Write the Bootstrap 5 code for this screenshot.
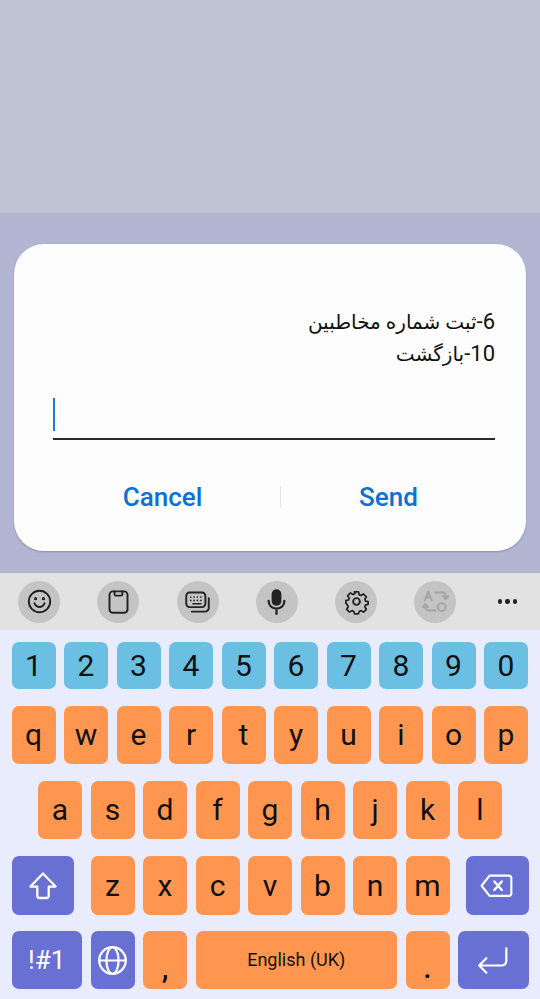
<!DOCTYPE html>
<html lang="en">
<head>
<meta charset="utf-8">
<title>Keyboard dialog</title>
<link href="https://cdn.jsdelivr.net/npm/bootstrap@5.3.0/dist/css/bootstrap.min.css" rel="stylesheet">
<style>
html,body{margin:0;height:100%;}
body{width:540px;height:999px;overflow:hidden;background:#e9ecfd;font-family:Roboto,"Liberation Sans",sans-serif;}
.top-band{height:213px;background:#c0c3d4;}
.scrim{height:360px;background:#b2b6d3;padding:31px 13.5px 0;}
.dialog-box{width:512.5px;height:307px;background:#fdfdfd;border-radius:30px;box-shadow:0 1px 2px rgba(70,70,90,.35);padding-top:62px;}
.msg{padding:0 31px 0 39.5px;font-size:22px;line-height:31px;color:#111;font-family:Roboto,"DejaVu Sans",sans-serif;}
.msg-ar{font-size:20px;}
.field{margin:28px 31px 0 39.5px;height:42px;border-bottom:2px solid #2a2a2c;}
.caret-bar{width:2px;height:33px;background:#1a7fd8;}
.dlg-actions{margin:37px 0 0 31.5px;height:40px;}
.dlg-btn{border:0;background:none;padding:0;color:#0a72d6;font-size:26px;font-weight:500;line-height:40px;border-radius:0;}
.dlg-btn:hover{color:#0a72d6;}
.b-cancel{width:235px;}
.b-send{width:215px;}
.dlg-sep{width:1px;height:22px;background:#e2e2e2;}
.tool-strip{height:57px;background:#e2e2e2;padding-left:18px;gap:37.3px;}
.tool-btn{width:42px;height:42px;border-radius:50%;background:#c4c4c4;flex:none;}
.tool-btn svg{width:27px;height:27px;fill:none;stroke:#222;stroke-width:1.7;stroke-linecap:round;stroke-linejoin:round;}
.tool-btn.dim svg{stroke:#a4a4a4;}
.tool-more{width:20px;margin-left:4px;gap:3px;flex:none;}
.tool-more i{width:4.5px;height:4.5px;border-radius:50%;background:#222;display:block;}
.kb-area{height:369px;background:#e9ecfd;padding:12px 0 0 11.5px;}
.kb-row{gap:8.5px;margin-bottom:17px;height:58px;}
.kb-row.nums{height:47px;}
.kb-row.r4{height:59px;margin-bottom:16px;}
.kb-row.indent{padding-left:26.5px;}
.kb-key{width:44px;height:100%;flex:none;border-radius:7px;color:#111;font-size:30px;line-height:1;}
.k-num{background:#6bbfe3;}
.k-let{background:#ff9650;}
.k-act{background:#6870d3;color:#fff;}
.k-shift{width:62.5px;margin-right:8px;}
.k-back{width:62.5px;margin-left:8px;}
.k-sym{width:70.5px;font-size:26px;}
.k-space{width:201.5px;font-size:18px;}
.k-enter{width:70.5px;}
.k-mark{font-size:30px;padding-top:16px;font-weight:500;}
.k-act svg{fill:none;stroke:#fff;stroke-width:2;stroke-linecap:round;stroke-linejoin:round;}
</style>
</head>
<body>
<div class="top-band"></div>
<div class="scrim">
  <div class="dialog-box">
    <div class="msg text-end" dir="rtl">
      <div>6-<span class="msg-ar">ثبت شماره مخاطبین</span></div>
      <div>10-<span class="msg-ar">بازگشت</span></div>
    </div>
    <div class="field"><div class="caret-bar"></div></div>
    <div class="dlg-actions d-flex align-items-center">
      <button class="btn dlg-btn b-cancel" type="button">Cancel</button>
      <div class="dlg-sep"></div>
      <button class="btn dlg-btn b-send" type="button">Send</button>
    </div>
  </div>
</div>
<div class="tool-strip d-flex align-items-center">
  <div class="tool-btn d-flex align-items-center justify-content-center"><svg viewBox="0 0 24 24"><circle cx="12" cy="12" r="9.5"/><path d="M7.5 13.5c1 2.4 2.6 3.4 4.5 3.4s3.500-1 4.500-3.400"/><circle cx="8.500" cy="9.500" r=".6"/><circle cx="15.500" cy="9.500" r=".6"/></svg></div>
  <div class="tool-btn d-flex align-items-center justify-content-center"><svg viewBox="0 0 24 24"><rect x="4" y="3" width="16" height="19" rx="3"/><path d="M8.500 3v2.500c0 .8.500 1.300 1.300 1.300h4.400c.8 0 1.300-.5 1.300-1.300V3"/></svg></div>
  <div class="tool-btn d-flex align-items-center justify-content-center"><svg viewBox="0 0 24 24"><rect x="2" y="4" width="17" height="13" rx="3"/><path d="M6 8h.01M9 8h.01M12 8h.01M15 8h.01M6 11h.01M9 11h.01M12 11h.01M15 11h.01M8 14h7" stroke-width="1.500"/><path d="M22 9v8.500a3.500 3.500 0 0 1-3.500 3.500H7"/></svg></div>
  <div class="tool-btn d-flex align-items-center justify-content-center"><svg viewBox="0 0 24 24"><rect x="8.500" y="2" width="7" height="13" rx="3.500" fill="#222"/><path d="M5 11.500c0 4 3 6.800 7 6.800s7-2.800 7-6.800M12 18.300V23" stroke-width="2"/></svg></div>
  <div class="tool-btn d-flex align-items-center justify-content-center"><svg viewBox="0 0 24 24"><circle cx="12" cy="12" r="3"/><path d="M10 2.500h4l.6 2.800 1.900.8 2.400-1.500 2.800 2.800-1.500 2.400.8 1.900 2.500.3v2.800l-2.500.6-.8 1.900 1.500 2.400-2.800 2.800-2.400-1.500-1.900.8-.6 2.400h-4l-.6-2.400-1.900-.8-2.400 1.500-2.800-2.800 1.500-2.400-.8-1.900L1.500 13.700v-2.800l2.500-.3.800-1.900-1.500-2.400 2.800-2.800 2.400 1.500 1.900-.8z" transform="translate(1.200 1.200) scale(.9)"/></svg></div>
  <div class="tool-btn dim d-flex align-items-center justify-content-center"><svg viewBox="0 0 24 24"><path d="M2.500 11l3-8 3 8M3.700 8.500h3.600M12 4h6c2 0 3 1 3 3v2.500M18.500 7l2.500 2.800L23.500 7M12 20H6c-2 0-3-1-3-3v-2.500M.8 17l2.200-2.800L5.500 17"/><circle cx="17.500" cy="17" r="3.500"/></svg></div>
  <div class="tool-more d-flex align-items-center"><i></i><i></i><i></i></div>
</div>
<div class="kb-area">
  <div class="kb-row nums d-flex">
    <div class="kb-key k-num d-flex align-items-center justify-content-center">1</div>
    <div class="kb-key k-num d-flex align-items-center justify-content-center">2</div>
    <div class="kb-key k-num d-flex align-items-center justify-content-center">3</div>
    <div class="kb-key k-num d-flex align-items-center justify-content-center">4</div>
    <div class="kb-key k-num d-flex align-items-center justify-content-center">5</div>
    <div class="kb-key k-num d-flex align-items-center justify-content-center">6</div>
    <div class="kb-key k-num d-flex align-items-center justify-content-center">7</div>
    <div class="kb-key k-num d-flex align-items-center justify-content-center">8</div>
    <div class="kb-key k-num d-flex align-items-center justify-content-center">9</div>
    <div class="kb-key k-num d-flex align-items-center justify-content-center">0</div>
  </div>
  <div class="kb-row d-flex">
    <div class="kb-key k-let d-flex align-items-center justify-content-center">q</div>
    <div class="kb-key k-let d-flex align-items-center justify-content-center">w</div>
    <div class="kb-key k-let d-flex align-items-center justify-content-center">e</div>
    <div class="kb-key k-let d-flex align-items-center justify-content-center">r</div>
    <div class="kb-key k-let d-flex align-items-center justify-content-center">t</div>
    <div class="kb-key k-let d-flex align-items-center justify-content-center">y</div>
    <div class="kb-key k-let d-flex align-items-center justify-content-center">u</div>
    <div class="kb-key k-let d-flex align-items-center justify-content-center">i</div>
    <div class="kb-key k-let d-flex align-items-center justify-content-center">o</div>
    <div class="kb-key k-let d-flex align-items-center justify-content-center">p</div>
  </div>
  <div class="kb-row indent d-flex">
    <div class="kb-key k-let d-flex align-items-center justify-content-center">a</div>
    <div class="kb-key k-let d-flex align-items-center justify-content-center">s</div>
    <div class="kb-key k-let d-flex align-items-center justify-content-center">d</div>
    <div class="kb-key k-let d-flex align-items-center justify-content-center">f</div>
    <div class="kb-key k-let d-flex align-items-center justify-content-center">g</div>
    <div class="kb-key k-let d-flex align-items-center justify-content-center">h</div>
    <div class="kb-key k-let d-flex align-items-center justify-content-center">j</div>
    <div class="kb-key k-let d-flex align-items-center justify-content-center">k</div>
    <div class="kb-key k-let d-flex align-items-center justify-content-center">l</div>
  </div>
  <div class="kb-row r4 d-flex">
    <div class="kb-key k-act k-shift d-flex align-items-center justify-content-center"><svg width="32" height="32" viewBox="0 0 28 28"><path d="M14 3L3 14.500h6v8c0 1.200.8 2 2 2h6c1.200 0 2-.8 2-2v-8h6z"/></svg></div>
    <div class="kb-key k-let d-flex align-items-center justify-content-center">z</div>
    <div class="kb-key k-let d-flex align-items-center justify-content-center">x</div>
    <div class="kb-key k-let d-flex align-items-center justify-content-center">c</div>
    <div class="kb-key k-let d-flex align-items-center justify-content-center">v</div>
    <div class="kb-key k-let d-flex align-items-center justify-content-center">b</div>
    <div class="kb-key k-let d-flex align-items-center justify-content-center">n</div>
    <div class="kb-key k-let d-flex align-items-center justify-content-center">m</div>
    <div class="kb-key k-act k-back d-flex align-items-center justify-content-center"><svg width="34" height="25.500" viewBox="0 0 32 24"><path d="M9 2.500h18c1.600 0 2.500.9 2.500 2.500v14c0 1.600-.9 2.500-2.500 2.500H9L1.500 12z"/><path d="M13.500 8l7 8M20.500 8l-7 8" stroke-width="2.300"/></svg></div>
  </div>
  <div class="kb-row d-flex">
    <div class="kb-key k-act k-sym d-flex align-items-center justify-content-center">!#1</div>
    <div class="kb-key k-act d-flex align-items-center justify-content-center"><svg width="31" height="31" viewBox="0 0 28 28"><circle cx="14" cy="14" r="12"/><ellipse cx="14" cy="14" rx="5.500" ry="12"/><path d="M2.500 14h23"/></svg></div>
    <div class="kb-key k-let k-mark d-flex align-items-center justify-content-center">,</div>
    <div class="kb-key k-let k-space d-flex align-items-center justify-content-center">English (UK)</div>
    <div class="kb-key k-let k-mark d-flex align-items-center justify-content-center">.</div>
    <div class="kb-key k-act k-enter d-flex align-items-center justify-content-center"><svg width="34" height="31" viewBox="0 0 30 28"><path d="M27 3v11c0 3-1.500 4.500-4.500 4.500H2.500M9 12l-6.500 6.500L9 25"/></svg></div>
  </div>
</div>
<script src="https://cdn.jsdelivr.net/npm/bootstrap@5.3.0/dist/js/bootstrap.bundle.min.js"></script>
</body>
</html>
